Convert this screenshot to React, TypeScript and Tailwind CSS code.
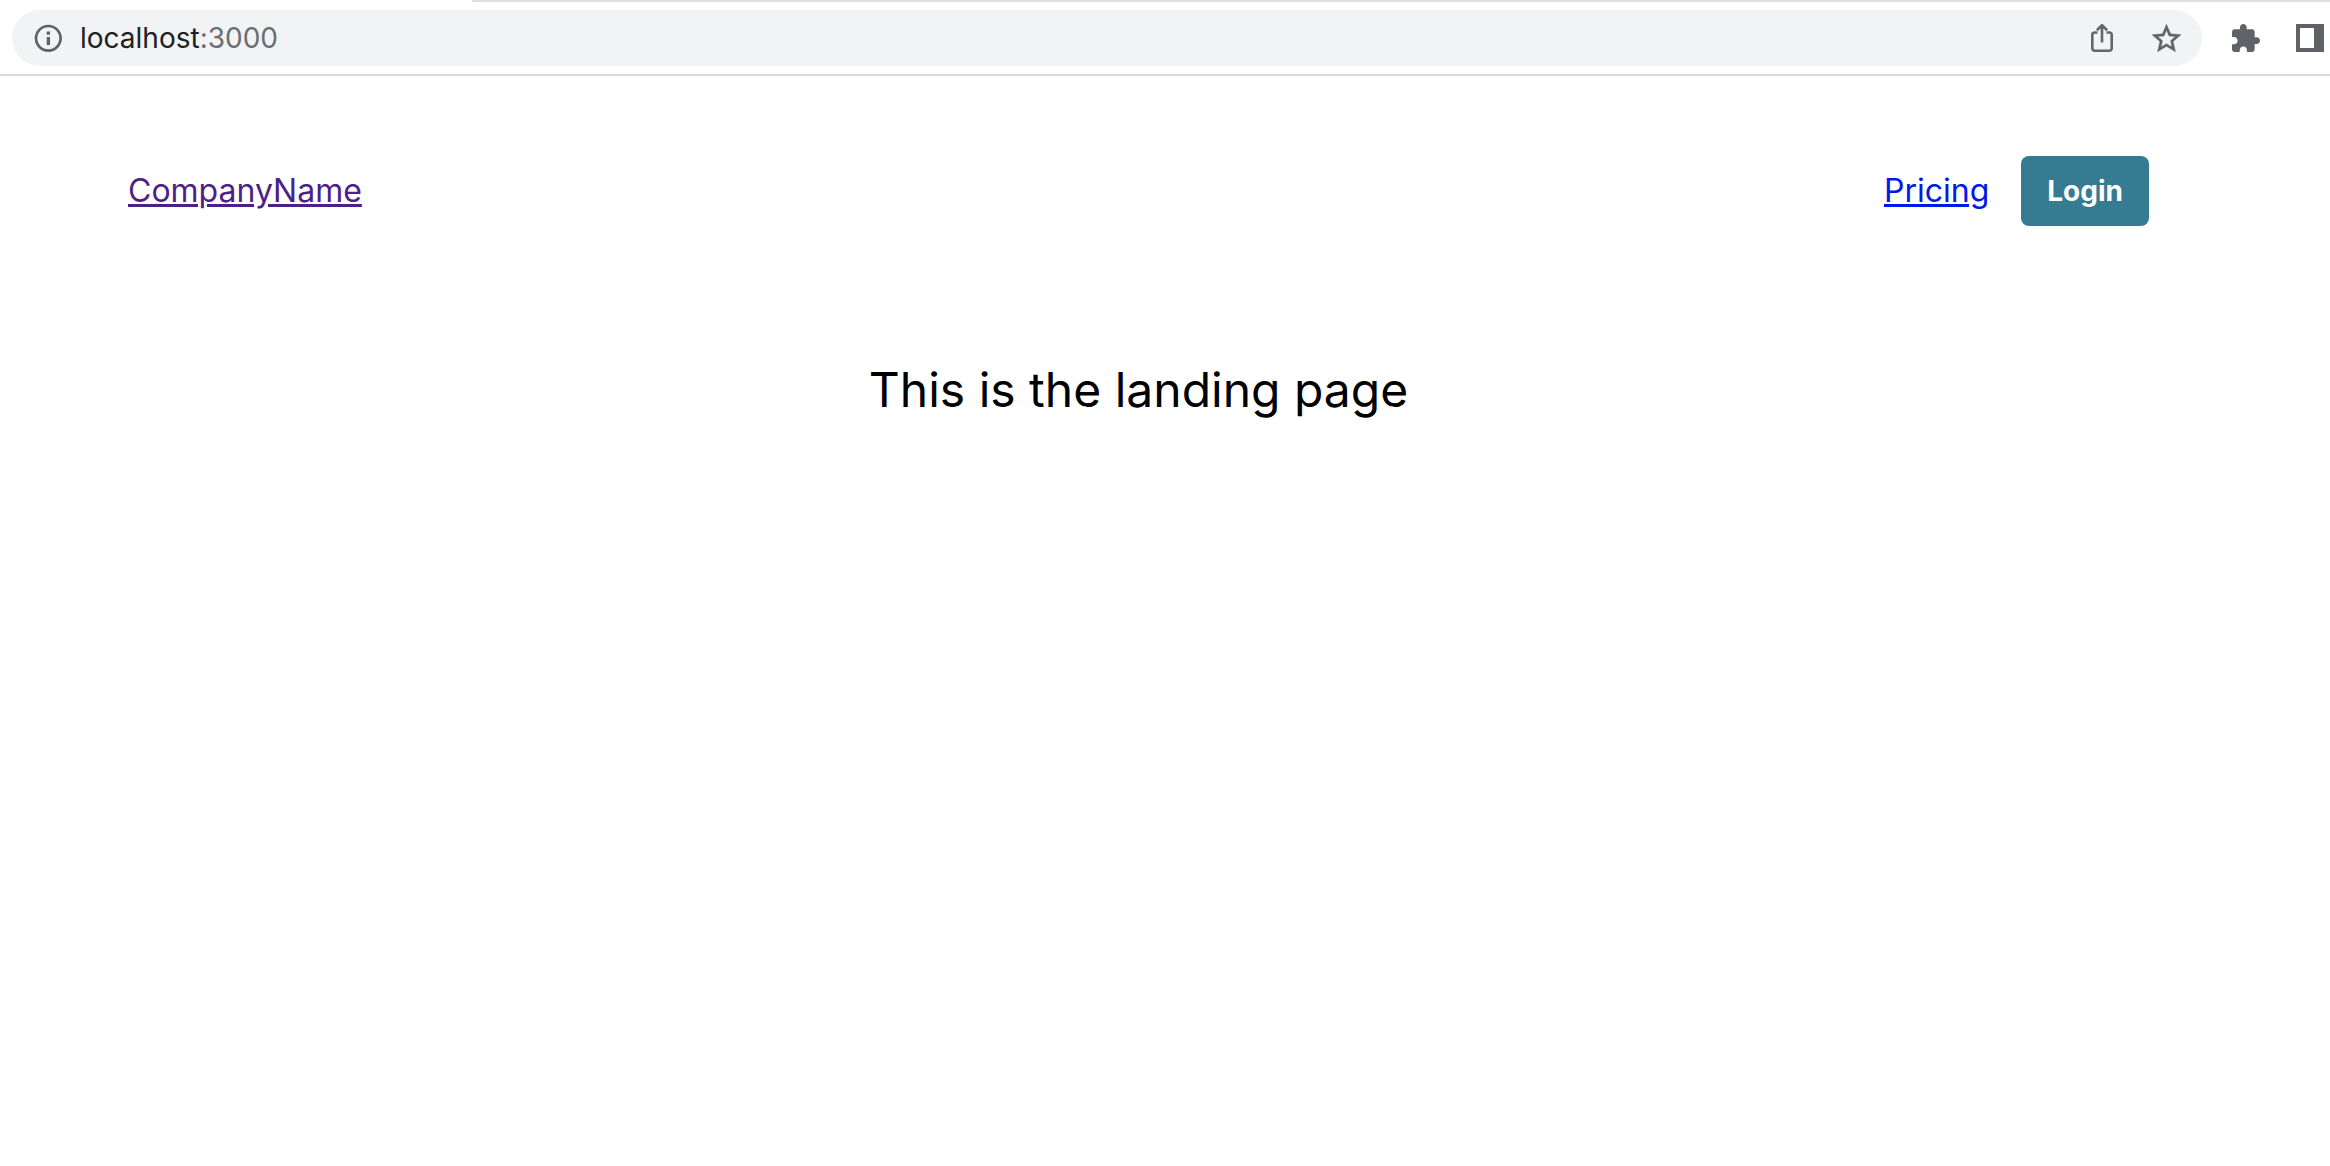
function InfoIcon() {
  return (
    <svg className="h-7 w-7 shrink-0" viewBox="0 0 28 28" fill="none" aria-hidden="true">
      <circle cx="14.3" cy="14.3" r="12.3" stroke="#5f6368" strokeWidth="2.7" />
      <path d="M12.7 7.6h3.3v3.2h-3.3zM12.7 13h3.3v7.9h-3.3z" fill="#5f6368" />
    </svg>
  );
}

function ShareIcon() {
  return (
    <svg className="h-7 w-[22px]" viewBox="0 0 22 28" fill="none" stroke="#666666" strokeWidth="2.6" aria-hidden="true">
      <path d="M6.5 8.5H3.6a2.3 2.3 0 0 0-2.3 2.4v13.4a2.3 2.3 0 0 0 2.3 2.4h14.8a2.3 2.3 0 0 0 2.3-2.4V10.9a2.3 2.3 0 0 0-2.3-2.4h-2.9" />
      <path d="M11 18.5V2M5.9 6.2 11 1.2l5.1 5" />
    </svg>
  );
}

function StarIcon() {
  return (
    <svg className="h-7 w-[29px]" viewBox="2 2 20 19" fill="#5f6368" stroke="#5f6368" strokeWidth="0.3" aria-hidden="true">
      <path d="m22 9.24-7.19-.62L12 2 9.19 8.63 2 9.24l5.46 4.73L5.82 21 12 17.27 18.18 21l-1.63-7.03L22 9.24zM12 15.4l-3.76 2.27 1-4.28-3.32-2.88 4.38-.38L12 6.1l1.71 4.04 4.38.38-3.32 2.88 1 4.28L12 15.4z" />
    </svg>
  );
}

function ExtensionIcon() {
  return (
    <svg className="h-7 w-7" viewBox="2 1 21 21" fill="#5f6368" aria-hidden="true">
      <path d="M20.5 11H19V7c0-1.1-.9-2-2-2h-4V3.5C13 2.12 11.88 1 10.5 1S8 2.12 8 3.5V5H4c-1.1 0-1.99.9-1.99 2v3.8H3.5c1.49 0 2.7 1.21 2.7 2.7s-1.21 2.7-2.7 2.7H2V20c0 1.1.9 2 2 2h3.8v-1.5c0-1.49 1.21-2.7 2.7-2.7 1.49 0 2.7 1.21 2.7 2.7V22H17c1.1 0 2-.9 2-2v-4h1.5c1.38 0 2.5-1.12 2.5-2.5S21.88 11 20.5 11z" />
    </svg>
  );
}

function SidePanelIcon() {
  return (
    <svg className="h-7 w-7" viewBox="0 0 28 28" fill="#5f6368" fillRule="evenodd" aria-hidden="true">
      <path d="M0 0h28v28H0zM4 4v20h14V4z" />
    </svg>
  );
}

function BrowserToolbar() {
  return (
    <div className="border-b-2 border-[#dadada] bg-white">
      <div className="ml-[472px] h-0.5 bg-[#dfdfe4]" />
      <div className="flex items-center pt-2 pr-1.5 pb-2 pl-3">
        <div className="flex h-14 flex-1 items-center rounded-full bg-[#f1f3f4] pr-[21px] pl-[22px]">
          <button type="button" aria-label="View site information">
            <InfoIcon />
          </button>
          <p className="ml-[18px] flex-1 text-[28px] leading-9 text-[#202124]">
            localhost<span className="text-[#6b6e71]">:3000</span>
          </p>
          <div className="flex items-center gap-[39px]">
            <button type="button" aria-label="Share this page">
              <ShareIcon />
            </button>
            <button type="button" aria-label="Bookmark this page">
              <StarIcon />
            </button>
          </div>
        </div>
        <div className="ml-[30px] flex items-center gap-9">
          <button type="button" aria-label="Extensions">
            <ExtensionIcon />
          </button>
          <button type="button" aria-label="Side panel">
            <SidePanelIcon />
          </button>
        </div>
      </div>
    </div>
  );
}

export default function App() {
  return (
    <div className="min-h-screen bg-white font-['Inter',sans-serif] text-black">
      <BrowserToolbar />
      <div className="pt-20 pr-[181px] pl-32">
        <header>
          <nav className="flex items-center justify-between text-[32px] leading-10">
            <a href="#home" className="text-[#4e1f87] underline">
              CompanyName
            </a>
            <div className="flex items-center gap-8">
              <a href="#pricing" className="text-[#0018e9] underline">
                Pricing
              </a>
              <button type="button" className="h-[70px] rounded-lg bg-[#357b92] px-[26px] text-[28px] font-bold text-white">
                Login
              </button>
            </div>
          </nav>
        </header>
        <main className="pt-[140px] text-center text-5xl">
          <h1>This is the landing page</h1>
        </main>
      </div>
    </div>
  );
}
